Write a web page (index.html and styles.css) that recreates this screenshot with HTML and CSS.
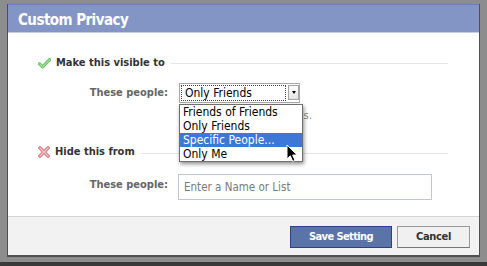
FILE: index.html
```html
<!DOCTYPE html>
<html>
<head>
<meta charset="utf-8">
<title>Custom Privacy</title>
<link rel="stylesheet" href="styles.css">
</head>
<body>
<div class="screen">
  <div class="dialog">
    <div class="titlebar">Custom Privacy</div>
    <div class="body">
      <div class="section-head">
        <svg class="icon" width="13" height="11" viewBox="0 0 13 11">
          <path d="M1.5 5.8 L4.6 8.8 L11.6 1.6" fill="none" stroke="#6fbf68" stroke-width="3.2" stroke-linecap="round" stroke-linejoin="round"/>
          <path d="M1.5 5.8 L4.6 8.8 L11.6 1.6" fill="none" stroke="#a9dea0" stroke-width="1.2" stroke-linecap="round" stroke-linejoin="round"/>
        </svg>
        <span class="head-text">Make this visible to</span>
        <span class="rule"></span>
      </div>
      <div class="field">
        <label class="field-label">These people:</label>
        <div class="select-wrap">
          <div class="select">
            <span class="select-value">Only Friends</span>
            <span class="select-btn"><span class="tri"></span></span>
          </div>
          <div class="hint"><span class="hint-covered">Only friends can see thi</span>s.</div>
          <ul class="menu">
            <li>Friends of Friends</li>
            <li>Only Friends</li>
            <li class="active">Specific People...</li>
            <li>Only Me</li>
          </ul>
          <svg class="cursor" width="13" height="19" viewBox="0 0 13 19">
            <path d="M1 1 L1 15 L4.3 11.8 L6.7 17.4 L9 16.4 L6.7 11 L11.2 11 Z" fill="#000" stroke="#fff" stroke-width="1" stroke-linejoin="round"/>
          </svg>
        </div>
      </div>
      <div class="section-head second">
        <svg class="icon" width="12" height="12" viewBox="0 0 12 12">
          <path d="M2 2 L10 10 M10 2 L2 10" fill="none" stroke="#d98489" stroke-width="3.4" stroke-linecap="square"/>
          <path d="M2 2 L10 10 M10 2 L2 10" fill="none" stroke="#f2c3c5" stroke-width="1.2" stroke-linecap="square"/>
        </svg>
        <span class="head-text">Hide this from</span>
        <span class="rule low"></span>
      </div>
      <div class="field field-input">
        <label class="field-label">These people:</label>
        <input class="text-input" type="text" placeholder="Enter a Name or List">
      </div>
    </div>
    <div class="footer">
      <button class="btn btn-primary">Save Setting</button>
      <button class="btn btn-secondary">Cancel</button>
    </div>
  </div>
</div>
</body>
</html>
```

FILE: styles.css
```css
html, body {
  margin: 0;
  padding: 0;
  background: #3c3c3c;
}

.screen {
  width: 487px;
  height: 266px;
  box-sizing: border-box;
  padding: 4px 0 0 7px;
  overflow: hidden;
  background: linear-gradient(#8d8d8d 0, #8d8d8d 262px, #3a3a3a 262px);
  font-family: "DejaVu Sans Condensed", "DejaVu Sans", sans-serif;
}

.dialog {
  width: 473px;
  box-sizing: border-box;
  border-left: 1px solid #505050;
  border-right: 1px solid #505050;
  border-bottom: 2px solid #505050;
}

.titlebar {
  background: #8395c5;
  border-top: 1px solid #6d80b6;
  border-bottom: 1px solid #c6cee3;
  padding: 6px 10px 3px;
  height: 18px;
  line-height: 18px;
  color: #fff;
  font-size: 15px;
  font-weight: bold;
  letter-spacing: -0.55px;
}

.body {
  background: #fff;
  padding: 23px 31px 16px 30px;
}

.section-head {
  display: flex;
  align-items: center;
  height: 14px;
  line-height: 14px;
  font-size: 11px;
  font-weight: bold;
  color: #333;
}

.section-head.second {
  margin-top: 22px;
}

.icon {
  flex: none;
  margin-right: 5px;
}

.head-text {
  white-space: nowrap;
}

.rule {
  flex: 1;
  height: 1px;
  background: #e6e6e6;
  margin-left: 6px;
}

.rule.low {
  margin-top: 3px;
}

.field {
  display: flex;
  align-items: flex-start;
  margin-top: 13px;
}

.field-input {
  margin-top: 15px;
}

.field-label {
  flex: none;
  width: 130px;
  margin-right: 10px;
  padding-top: 3px;
  text-align: right;
  font-size: 11px;
  line-height: 14px;
  font-weight: bold;
  color: #666;
  white-space: nowrap;
}

.field-input .field-label {
  padding-top: 4px;
}

.select-wrap {
  position: relative;
  margin-left: 1px;
}

.select {
  display: flex;
  align-items: flex-start;
  width: 121px;
  height: 20px;
  box-sizing: border-box;
  border: 1px solid #a8a8a8;
  padding: 1px 0 0 1px;
  background: #fff;
}

.select-value {
  width: 105px;
  height: 16px;
  box-sizing: border-box;
  border: 1px dotted #444;
  padding-left: 3px;
  font-size: 12px;
  line-height: 14px;
  color: #000;
  white-space: nowrap;
}

.select-btn {
  display: flex;
  align-items: center;
  justify-content: center;
  margin-left: 2px;
  width: 11px;
  height: 15px;
  box-sizing: border-box;
  border: 1px solid #a3a3a3;
  background: linear-gradient(#ffffff, #e2e2e2);
}

.tri {
  width: 0;
  height: 0;
  border-left: 2.5px solid transparent;
  border-right: 2.5px solid transparent;
  border-top: 3px solid #000;
}

.hint {
  margin-top: 6px;
  font-size: 11px;
  line-height: 14px;
  color: #808080;
  letter-spacing: 0.3px;
  white-space: nowrap;
}

.hint-covered {
  visibility: hidden;
}

.menu {
  position: absolute;
  top: 21px;
  left: 0;
  width: 124px;
  box-sizing: border-box;
  margin: 0;
  padding: 0;
  list-style: none;
  background: #fff;
  border: 1px solid #6f6f6f;
  box-shadow: 1px 2px 4px rgba(0, 0, 0, 0.45);
  z-index: 2;
}

.menu li {
  height: 14px;
  line-height: 14px;
  padding-left: 3px;
  font-size: 12px;
  color: #000;
  white-space: nowrap;
}

.menu li.active {
  background: #3b78d8;
  color: #fff;
}

.cursor {
  position: absolute;
  left: 107px;
  top: 61px;
  z-index: 3;
}

.text-input {
  width: 254px;
  height: 26px;
  box-sizing: border-box;
  margin: 0;
  border: 1px solid #bdc7d8;
  padding: 0 5px;
  font-family: inherit;
  font-size: 11.5px;
  color: #333;
  background: #fff;
  outline: none;
}

.text-input::placeholder {
  color: #7a7a7a;
}

.footer {
  display: flex;
  justify-content: flex-end;
  gap: 5px;
  height: 39px;
  box-sizing: border-box;
  border-top: 1px solid #d4d4d4;
  padding: 9px 9px 0 0;
  background: #f2f2f2;
}

.btn {
  height: 22px;
  box-sizing: border-box;
  margin: 0;
  padding: 0;
  font-family: inherit;
  font-size: 11px;
  font-weight: bold;
  line-height: 20px;
  text-align: center;
}

.btn-primary {
  width: 102px;
  background: #5b74a8;
  border: 1px solid #29447e;
  color: #fff;
  letter-spacing: -0.6px;
}

.btn-secondary {
  width: 73px;
  background: #f0f0f0;
  border: 1px solid #999;
  border-bottom-color: #777;
  color: #333;
  letter-spacing: -0.3px;
}
```
